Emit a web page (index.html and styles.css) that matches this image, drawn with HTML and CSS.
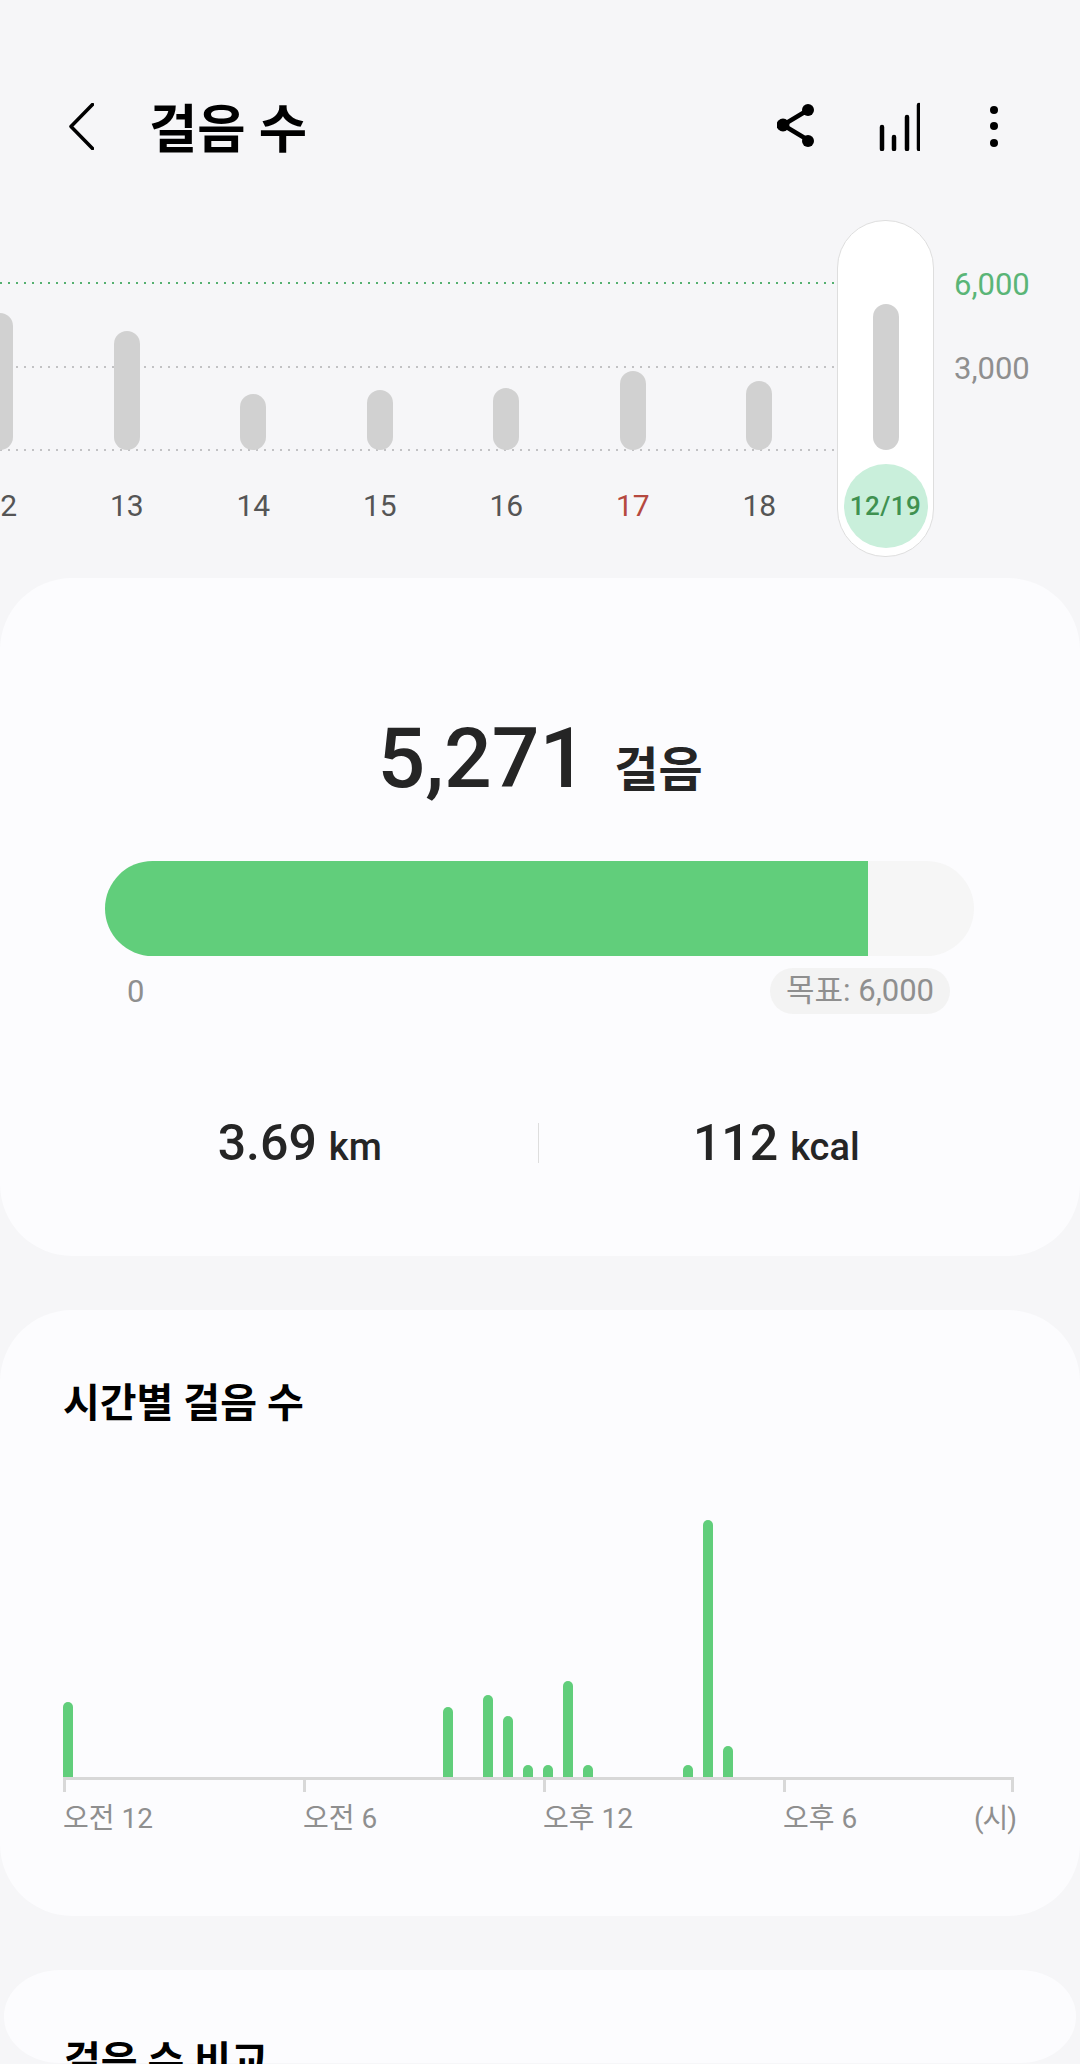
FILE: index.html
```html
<!DOCTYPE html>
<html lang="ko">
<head>
  <meta charset="UTF-8">
  <title>걸음 수</title>
  <link rel="stylesheet" href="styles.css">
</head>
<body>
  <div class="appbar">
    <svg class="back" width="25" height="47" viewBox="0 0 25 47"><path d="M23.5 1.5 2 23.5l21.5 22" /></svg>
    <h1>걸음 수</h1>
    <div class="actions">
      <svg width="40" height="44" viewBox="0 0 40 44"><path class="line" d="M31 6 6 21l25 15"/><circle cx="6" cy="21" r="6.5"/><circle cx="31" cy="6" r="6"/><circle cx="31" cy="37" r="6"/></svg>
      <svg width="42" height="50" viewBox="0 0 42 50"><path class="bars" d="M4 26v22M16 36v12M29 16v32M41 4v44"/></svg>
      <svg class="more" width="10" height="44" viewBox="0 0 10 44"><circle cx="5" cy="6" r="4"/><circle cx="5" cy="22" r="4"/><circle cx="5" cy="39" r="4"/></svg>
    </div>
  </div>

  <div class="trend">
    <div class="plot">
      <div class="day"><div class="slot"><div class="bar" style="height:137px"></div></div><span>12</span></div>
      <div class="day"><div class="slot"><div class="bar" style="height:119px"></div></div><span>13</span></div>
      <div class="day"><div class="slot"><div class="bar" style="height:56px"></div></div><span>14</span></div>
      <div class="day"><div class="slot"><div class="bar" style="height:60px"></div></div><span>15</span></div>
      <div class="day"><div class="slot"><div class="bar" style="height:62px"></div></div><span>16</span></div>
      <div class="day"><div class="slot"><div class="bar" style="height:79px"></div></div><span class="sunday">17</span></div>
      <div class="day"><div class="slot"><div class="bar" style="height:69px"></div></div><span>18</span></div>
    </div>
    <div class="today">
      <div class="slot"><div class="bar" style="height:146px"></div></div>
      <div class="today-date">12/19</div>
    </div>
    <div class="scale">
      <div class="goal">6,000</div>
      <div>3,000</div>
    </div>
  </div>

  <div class="card summary">
    <div class="total"><b>5,271</b><span>걸음</span></div>
    <div class="progress"><div class="progress-fill" style="width:87.85%"></div></div>
    <div class="range">
      <span>0</span>
      <span class="target">목표: 6,000</span>
    </div>
    <div class="stats">
      <div class="stat"><b>3.69</b><span>km</span></div>
      <div class="stat"><b>112</b><span>kcal</span></div>
    </div>
  </div>

  <div class="card hourly">
    <h2>시간별 걸음 수</h2>
    <div class="hours">
      <i style="grid-column:1;height:75px"></i>
      <i style="grid-column:20;height:70px"></i>
      <i style="grid-column:22;height:82px"></i>
      <i style="grid-column:23;height:61px"></i>
      <i style="grid-column:24;height:12px"></i>
      <i style="grid-column:25;height:12px"></i>
      <i style="grid-column:26;height:96px"></i>
      <i style="grid-column:27;height:12px"></i>
      <i style="grid-column:32;height:12px"></i>
      <i style="grid-column:33;height:257px"></i>
      <i style="grid-column:34;height:31px"></i>
    </div>
    <div class="axis"><div></div><div></div><div></div><div></div></div>
    <div class="axis-labels">
      <span>오전 12</span>
      <span>오전 6</span>
      <span>오후 12</span>
      <span>오후 6</span>
      <span class="unit">(시)</span>
    </div>
  </div>

  <div class="card compare">
    <h2>걸음 수 비교</h2>
  </div>
</body>
</html>
```

FILE: styles.css
```css
* { box-sizing: border-box; }
html, body { margin: 0; height: 2064px; overflow: hidden; }
body { background: #f6f6f8; font-family: Roboto, "Noto Sans CJK KR", sans-serif; color: #252525; }
h1, h2 { margin: 0; color: #000; font-weight: 700; }

/* app bar */
.appbar { display: flex; align-items: center; height: 84px; margin-top: 84px; padding-left: 69px; }
.back { fill: none; stroke: #000; stroke-width: 3.5; stroke-linecap: round; stroke-linejoin: round; }
.appbar h1 { margin-left: 55px; padding-top: 7px; font-size: 52.5px; line-height: 60px; }
.actions { display: flex; align-items: center; gap: 61px; margin-left: auto; margin-right: 81px; }
.more { margin-left: 8px; }
.line { fill: none; stroke: #000; stroke-width: 4.5; }
.bars { fill: none; stroke: #000; stroke-width: 4.5; stroke-linecap: round; }

/* 7 day trend */
.trend { display: flex; height: 337px; margin-top: 52px; }
.plot {
  display: flex; width: 837px; overflow: hidden;
  background-image:
    repeating-linear-gradient(90deg, #55b070 0 2px, transparent 2px 8px),
    repeating-linear-gradient(90deg, #c2c2c4 0 2px, transparent 2px 8px),
    repeating-linear-gradient(90deg, #c2c2c4 0 2px, transparent 2px 8px);
  background-size: 100% 2px;
  background-repeat: no-repeat;
  background-position: 0 62px, 0 146px, 0 229px;
}
.day { flex: 0 0 126.5px; text-align: center; font-size: 30px; line-height: 84px; color: #555; }
.day:first-child { margin-left: -63px; }
.day span { display: block; margin-top: 14px; }
.day .sunday { color: #b5493f; }
.slot { display: flex; align-items: flex-end; justify-content: center; height: 230px; }
.bar { width: 26px; border-radius: 13px; background: #d1d1d1; }
.today {
  flex: 0 0 97px; border: 1px solid #dedede; border-radius: 48px; background: #fff;
  display: flex; flex-direction: column; align-items: center;
}
.today .slot { height: 229px; }
.today-date {
  width: 84px; height: 84px; margin-top: 14px; border-radius: 50%; background: #c9efdb; color: #3f9150;
  font-size: 26px; font-weight: 500; letter-spacing: 0.4px; line-height: 84px; text-align: center; white-space: nowrap;
}
.scale { margin-left: 20px; padding-top: 23px; font-size: 31px; line-height: 84px; color: #8f8f8f; }
.scale .goal { color: #5ab577; }

/* cards */
.card { margin-top: 54px; border-radius: 72px; background: #fcfcfe; }
.summary { height: 678px; margin-top: 21px; padding-top: 131px; }
.total { display: flex; justify-content: center; align-items: baseline; gap: 27px; line-height: 100px; }
.total b { font-size: 84px; font-weight: 500; }
.total span { font-size: 48px; font-weight: 700; }
.progress { height: 95px; margin: 40px 106px 0 105px; border-radius: 48px; background: #f6f6f6; overflow: hidden; }
.progress-fill { height: 100%; background: #61ce7b; }
.range { display: flex; justify-content: space-between; align-items: center; margin: 12px 130px 0 127px; font-size: 31px; color: #8f8f8f; }
.target { padding: 0 16px; border-radius: 23px; background: #f3f3f3; line-height: 46px; }
.stats { display: flex; height: 40px; margin: 109px 66px 0 62px; }
.stat { flex: 1; display: flex; justify-content: center; align-items: baseline; height: 40px; font-weight: 500; line-height: 40px; }
.stat + .stat { border-left: 1px solid #dedede; }
.stat b { font-size: 50px; font-weight: 500; }
.stat span { margin-left: 12px; font-size: 38px; }

/* hourly steps */
.hourly { height: 606px; padding: 69px 66px 0 63px; }
.hourly h2, .compare h2 { font-size: 40px; line-height: 50px; }
.hours { display: grid; grid-template-columns: repeat(48, 20px); align-items: end; height: 277px; margin-top: 71px; }
.hours i { grid-row: 1; width: 10px; border-radius: 5px 5px 0 0; background: #61ce7b; }
.axis { display: grid; grid-template-columns: 240px 240px 240px 1fr; height: 15px; border-top: 3px solid #d8d8d8; }
.axis div { border-left: 3px solid #d8d8d8; }
.axis div:last-child { border-right: 3px solid #d8d8d8; }
.axis-labels { display: grid; grid-template-columns: 240px 240px 240px 1fr auto; margin-top: 2px; font-size: 28px; line-height: 50px; color: #8f8f8f; }
.axis-labels .unit { margin-right: -2px; letter-spacing: -1px; }

/* only the top of this card is on screen, squeezed against the bottom edge */
.compare { height: 93px; margin: 54px 4px 0; padding: 67px 60px 0; border-radius: 56px / 46px; }
```
